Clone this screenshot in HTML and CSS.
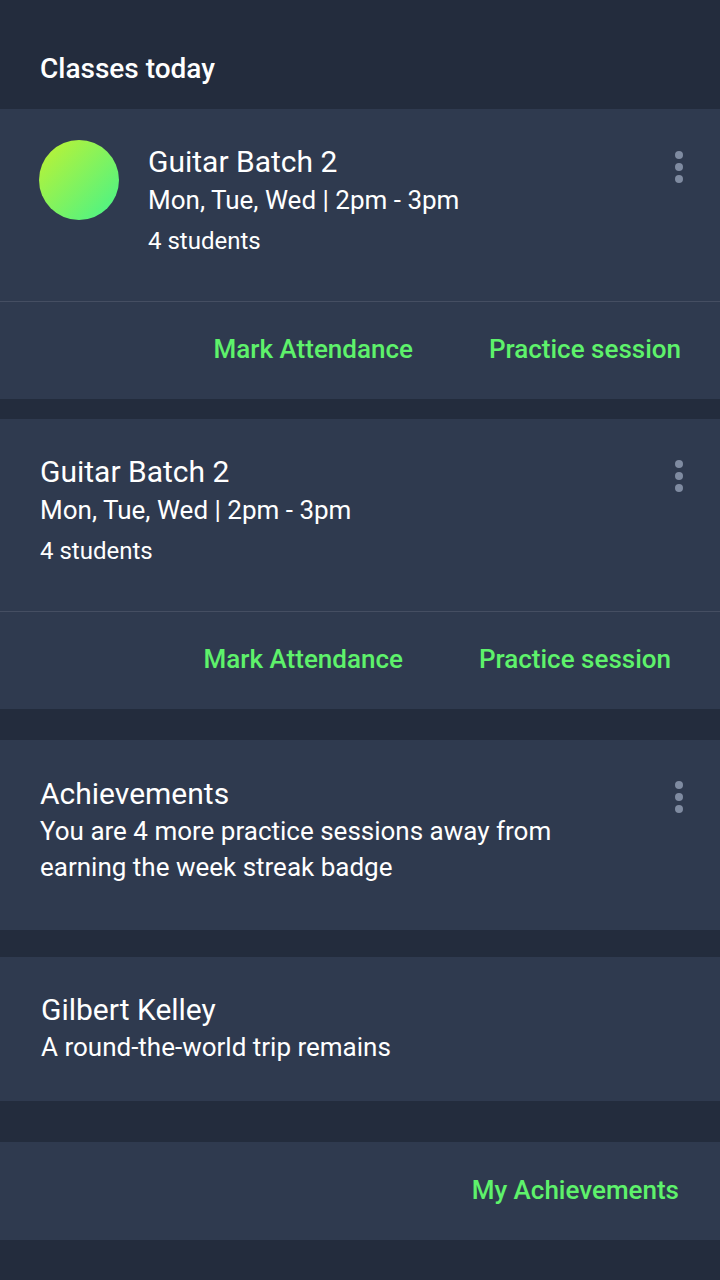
FILE: index.html
```html
<!DOCTYPE html>
<html>
<head>
<meta charset="utf-8">
<link rel="stylesheet" href="styles.css">
</head>
<body>
<div class="screen">
  <header class="header">Classes today</header>

  <section class="card card-first">
    <div class="card-main with-avatar">
      <div class="avatar"></div>
      <div class="info">
        <div class="title">Guitar Batch 2</div>
        <div class="sub">Mon, Tue, Wed | 2pm - 3pm</div>
        <div class="small">4 students</div>
      </div>
      <div class="dots"><span></span><span></span><span></span></div>
    </div>
    <div class="actions pad-a">
      <span class="btn">Mark Attendance</span>
      <span class="btn">Practice session</span>
    </div>
  </section>

  <section class="card card-second">
    <div class="card-main">
      <div class="info">
        <div class="title">Guitar Batch 2</div>
        <div class="sub">Mon, Tue, Wed | 2pm - 3pm</div>
        <div class="small">4 students</div>
      </div>
      <div class="dots"><span></span><span></span><span></span></div>
    </div>
    <div class="actions pad-b">
      <span class="btn">Mark Attendance</span>
      <span class="btn">Practice session</span>
    </div>
  </section>

  <section class="card card-ach">
    <div class="text-block">
      <div class="title">Achievements</div>
      <div class="sub body">You are 4 more practice sessions away from earning the week streak badge</div>
    </div>
    <div class="dots"><span></span><span></span><span></span></div>
  </section>

  <section class="card card-person">
    <div class="text-block">
      <div class="title">Gilbert Kelley</div>
      <div class="sub">A round-the-world trip remains</div>
    </div>
  </section>

  <section class="card card-link">
    <span class="btn">My Achievements</span>
  </section>
</div>
</body>
</html>
```

FILE: styles.css
```css
* { box-sizing: border-box; }
html, body {
  margin: 0;
  padding: 0;
  background: #232c3d;
}
body {
  font-family: Roboto, "Noto Sans", sans-serif;
  color: #ffffff;
  width: 720px;
  height: 1280px;
  overflow: hidden;
}
.screen {
  display: flex;
  flex-direction: column;
}
.header {
  height: 109px;
  padding: 51px 0 0 40px;
  font-size: 28px;
  font-weight: 500;
  line-height: 36px;
}
.card {
  background: #2f3a4f;
}
.card-second { margin-top: 20px; }
.card-ach { margin-top: 31px; }
.card-person { margin-top: 27px; }
.card-link { margin-top: 41px; }

.card-main {
  height: 193px;
  display: flex;
  align-items: flex-start;
  padding: 35px 0 0 40px;
  border-bottom: 1px solid #454e62;
}
.card-main.with-avatar { padding: 31px 0 0 39px; }
.avatar {
  width: 80px;
  height: 80px;
  border-radius: 50%;
  background: linear-gradient(135deg, #c2f230 0%, #43f38c 100%);
  flex: none;
  margin-right: 29px;
}
.with-avatar .info { padding-top: 4px; }
.info { flex: 1; }
.title {
  font-size: 30px;
  line-height: 36px;
}
.sub {
  font-size: 26px;
  line-height: 40px;
}
.small {
  font-size: 24px;
  line-height: 42px;
}
.dots {
  flex: none;
  width: 8px;
  margin-right: 37px;
  margin-top: 6px;
  display: flex;
  flex-direction: column;
  gap: 4px;
}
.card-main.with-avatar .dots { margin-top: 11px; }
.dots span {
  width: 8px;
  height: 8px;
  border-radius: 50%;
  background: #7f8ba1;
}
.actions {
  height: 97px;
  display: flex;
  justify-content: flex-end;
  align-items: center;
  gap: 76px;
  padding-bottom: 4px;
}
.pad-a { padding-right: 39px; }
.pad-b { padding-right: 49px; }
.btn {
  color: #5ef26b;
  font-size: 26px;
  font-weight: 500;
  line-height: 32px;
}

.card-ach {
  height: 190px;
  display: flex;
  align-items: flex-start;
  padding: 36px 0 0 40px;
}
.card-ach .dots { margin-top: 5px; }
.text-block { flex: 1; }
.body {
  line-height: 36px;
  margin-top: 1px;
  max-width: 560px;
}
.card-person {
  height: 144px;
  padding: 35px 0 0 41px;
}
.card-person .sub { line-height: 38px; }
.card-link {
  height: 98px;
  display: flex;
  justify-content: flex-end;
  align-items: center;
  padding-right: 41px;
  padding-bottom: 2px;
}
```
